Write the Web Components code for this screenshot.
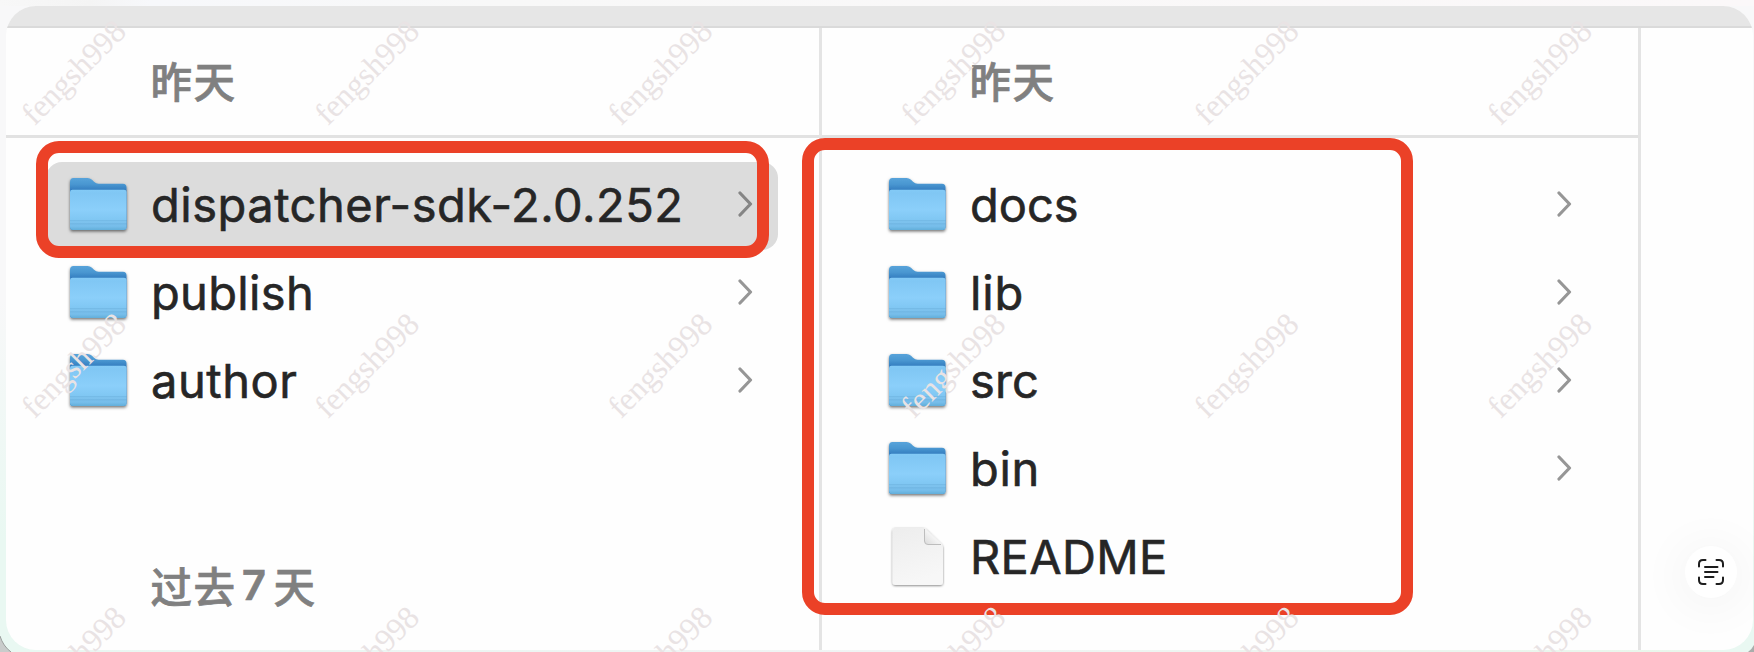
<!DOCTYPE html>
<html lang="zh-CN">
<head>
<meta charset="utf-8">
<title>Finder</title>
<style>
html,body{margin:0;height:100%;overflow:hidden}
body{font-family:Inter,"Noto Sans CJK SC",sans-serif;background:#f7f7f9}
</style>
</head>
<body>
<finder-window>
  <finder-column>
    <group-heading>昨天</group-heading>
    <file-row kind="folder" fit="532.5" selected>dispatcher-sdk-2.0.252</file-row>
    <file-row kind="folder" fit="163">publish</file-row>
    <file-row kind="folder" fit="146.5">author</file-row>
    <group-heading later>过去<b style="font-weight:600;margin:0 6px 0 5.5px">7</b>天</group-heading>
  </finder-column>
  <finder-column>
    <group-heading>昨天</group-heading>
    <file-row kind="folder" fit="108.5">docs</file-row>
    <file-row kind="folder" fit="54">lib</file-row>
    <file-row kind="folder" fit="69">src</file-row>
    <file-row kind="folder" fit="70">bin</file-row>
    <file-row kind="document" fit="197.5">README</file-row>
  </finder-column>
</finder-window>
<highlight-box style="left:35.5px;top:140.5px;width:733.5px;height:117px"></highlight-box>
<highlight-box style="left:802px;top:138px;width:610.5px;height:477px"></highlight-box>
<live-text-button></live-text-button>
<water-mark text="fengsh998"></water-mark>
<script>
class Base extends HTMLElement{
  constructor(){super();this.attachShadow({mode:'open'})}
  draw(html){this.shadowRoot.innerHTML=html}
}
customElements.define('finder-window',class extends Base{
  connectedCallback(){this.draw(`<style>
  :host{display:block;box-sizing:border-box;height:652px;padding:6px 1px 2px 6px;
    background:linear-gradient(90deg,#f8f8f8,#f4f4f4 90px,#f7f8fb 150px,#f8f8f8 500px,#fbf8f9) 0 0/100% 6px no-repeat,
    linear-gradient(#f8f8f9,#f8f8f9 300px,#e9f8f2 540px,#e9f8f2)}
  .panel{height:644px;border-radius:30px;overflow:hidden;background:#fefefe;display:flex;flex-direction:column}
  .bar{height:20px;flex:none;background:#e6e6e6;border-bottom:2px solid #dadada}
  .cols{display:flex;flex:1;margin-left:-3px;min-height:0}
  .corner{position:absolute;bottom:0;width:11px;height:16px}
  .foot{position:absolute;left:0;right:0;bottom:0;height:2px;background:linear-gradient(90deg,transparent 30px,#e9f7f2 60px,#f0f4f4 900px,#e9f7ec 1700px,transparent 1725px)}
  </style><div class="panel"><div class="bar"></div><div class="cols"><slot></slot></div></div>
  <div class="foot"></div>
  <svg class="corner" style="left:0" viewBox="0 0 11 16"><path d="M0 0Q3 10 11 16H0Z" fill="#c9cccb"/><path d="M0 0Q3 10 11 16" fill="none" stroke="#9a9e9c" stroke-width="1"/></svg>
  <svg class="corner" style="right:0;width:6px;height:7px" viewBox="0 0 6 7"><path d="M6 0Q4 4 0 7H6Z" fill="#a9adab"/></svg>`)}
});
customElements.define('finder-column',class extends Base{
  connectedCallback(){this.draw(`<style>
  :host{display:flex;flex-direction:column;box-sizing:border-box;width:819px;flex:none;border-right:3px solid #e4e4e4}
  </style><slot></slot>`)}
});
customElements.define('group-heading',class extends Base{
  connectedCallback(){this.draw(`<style>
  :host{display:flex;flex:none;align-items:center;box-sizing:border-box;height:110px;padding:0 0 3px 147.5px;margin-bottom:23.5px;
    border-bottom:3px solid #e2e2e2;font-weight:500;font-size:41.5px;letter-spacing:1.5px;color:#808080;-webkit-text-stroke:.7px #808080;white-space:nowrap}
  :host([later]){border:0;margin-top:106px;margin-bottom:0;height:110px}
  </style><slot></slot>`)}
});
const folder=`<svg width="65" height="62" viewBox="0 0 65 62"><defs>
<linearGradient id="b" x2="0" y2="1"><stop stop-color="#57a3da"/><stop offset=".12" stop-color="#4a97d1"/><stop offset=".25" stop-color="#3179bd"/></linearGradient>
<linearGradient id="f" x2="0" y2="1"><stop stop-color="#83caf6"/><stop offset=".08" stop-color="#80c7f4"/><stop offset=".5" stop-color="#8bcffa"/><stop offset=".74" stop-color="#80c7f3"/><stop offset=".77" stop-color="#72b8e4"/><stop offset=".8" stop-color="#82c7f2"/><stop offset=".84" stop-color="#72b8e5"/><stop offset=".9" stop-color="#78bfec"/><stop offset="1" stop-color="#62aeda"/></linearGradient>
<filter id="s" x="-10%" y="-10%" width="120%" height="125%"><feDropShadow dx="0" dy="1.5" stdDeviation="1.4" flood-opacity=".55"/></filter></defs>
<g filter="url(#s)"><path d="M4 8q0-4 3.5-4h14q2.5 0 4.500 1.800l2 2q2.200 2 4.500 2H57q3.500 0 3.500 3.500V53q0 3-3 3H7q-3 0-3-3Z" fill="url(#b)"/>
<path d="M4 18q0-2.300 2.500-2.300H58q2.500 0 2.500 2.300V53q0 3-3 3H7q-3 0-3-3Z" fill="url(#f)"/></g></svg>`;
const doc=`<svg width="65" height="66" viewBox="0 0 65 66"><defs>
<linearGradient id="d" x2=".3" y2="1"><stop stop-color="#ededed"/><stop offset="1" stop-color="#f7f7f7"/></linearGradient>
<linearGradient id="c" x1="0" y1="1" x2=".6" y2=".4"><stop stop-color="#dadada"/><stop offset="1" stop-color="#fafafa"/></linearGradient>
<filter id="s" x="-10%" y="-10%" width="120%" height="120%"><feDropShadow dx="0" dy=".8" stdDeviation=".9" flood-opacity=".5"/></filter></defs>
<path filter="url(#s)" d="M7.500 7q0-3 3-3H38q2 0 3.500 1.500L56.500 20q1.500 1.500 1.500 3.500V58q0 3-3 3H10.500q-3 0-3-3Z" fill="url(#d)"/>
<path d="M39.500 4.500V17q0 3.500 3.500 3.500H57Z" fill="url(#c)"/><path d="M39.500 5V17q0 3.500 3.500 3.500H56" fill="none" stroke="#bdbdbd" stroke-width="1"/></svg>`;
customElements.define('file-row',class extends Base{
  connectedCallback(){
    const isDoc=this.getAttribute('kind')==='document';
    this.draw(`<style>
  :host{display:grid;grid-template-columns:81px 1fr 15px;align-items:center;box-sizing:border-box;height:88px;margin:0 41px 0 43px;padding:0 25px 0 20px;border-radius:16px;flex:none;
    font-size:47px;color:#262626;-webkit-text-stroke:.6px #262626;white-space:nowrap}
  :host([selected]){background:#dcdcdc}
  .icon{display:flex;padding-bottom:1px}
  .name{line-height:58px;padding:0 0 2px 4px}
  .chev{display:block;margin-bottom:3px;color:#969696}
  :host([selected]) .chev{color:#858585}
  </style><span class="icon">${isDoc?doc:folder}</span><span class="name"><span id="t"><slot></slot></span></span>
  ${isDoc?'':'<svg class="chev" width="15" height="28" viewBox="0 0 15 28"><path d="M2 3 12.500 14 2 25" fill="none" stroke="currentColor" stroke-width="3.200" stroke-linecap="round" stroke-linejoin="round"/></svg>'}`);
    const t=this.shadowRoot.getElementById('t'),w=t.getBoundingClientRect().width;
    t.style.letterSpacing=(this.getAttribute('fit')-w)/this.textContent.length+'px';
  }
});
customElements.define('highlight-box',class extends Base{
  connectedCallback(){this.draw(`<style>:host{display:block;position:absolute;box-sizing:border-box;border:12px solid #eb4127;border-radius:23px}</style>`)}
});
customElements.define('live-text-button',class extends Base{
  connectedCallback(){this.draw(`<style>
  :host{position:absolute;left:1685px;top:546px;width:52px;height:52px;border-radius:50%;background:#fff;display:flex;align-items:center;justify-content:center;box-shadow:0 4px 46px 10px rgba(0,0,0,.035)}
  svg{display:block}
  </style><svg width="28" height="28" viewBox="0 0 28 28" fill="none" stroke="#1d1d1d" stroke-width="2" stroke-linecap="round"><path d="M2 8.500V6Q2 2 6 2H8.500M19.500 2H22Q26 2 26 6V8.500M26 19.500V22Q26 26 22 26H19.500M8.500 26H6Q2 26 2 22V19.500M8 9H20.500M8 14H20.500M8 19H16.500"/></svg>`)}
});
customElements.define('water-mark',class extends Base{
  connectedCallback(){
    let s='';
    for(let r=0;r<3;r++)for(let c=0;c<6;c++)
      s+=`<text transform="translate(${34.5+c*293.2} ${126.5+r*293.1}) rotate(-45)" textLength="132">${this.getAttribute('text')}</text>`;
    this.draw(`<style>
  :host{display:block;position:absolute;left:0;top:0;width:1754px;height:652px;pointer-events:none}
  svg{display:block;font-family:"Liberation Serif",serif;font-size:32px;fill:#e9e3e4}
  </style><svg width="1754" height="652">${s}</svg>`)}
});
</script>
</body>
</html>
